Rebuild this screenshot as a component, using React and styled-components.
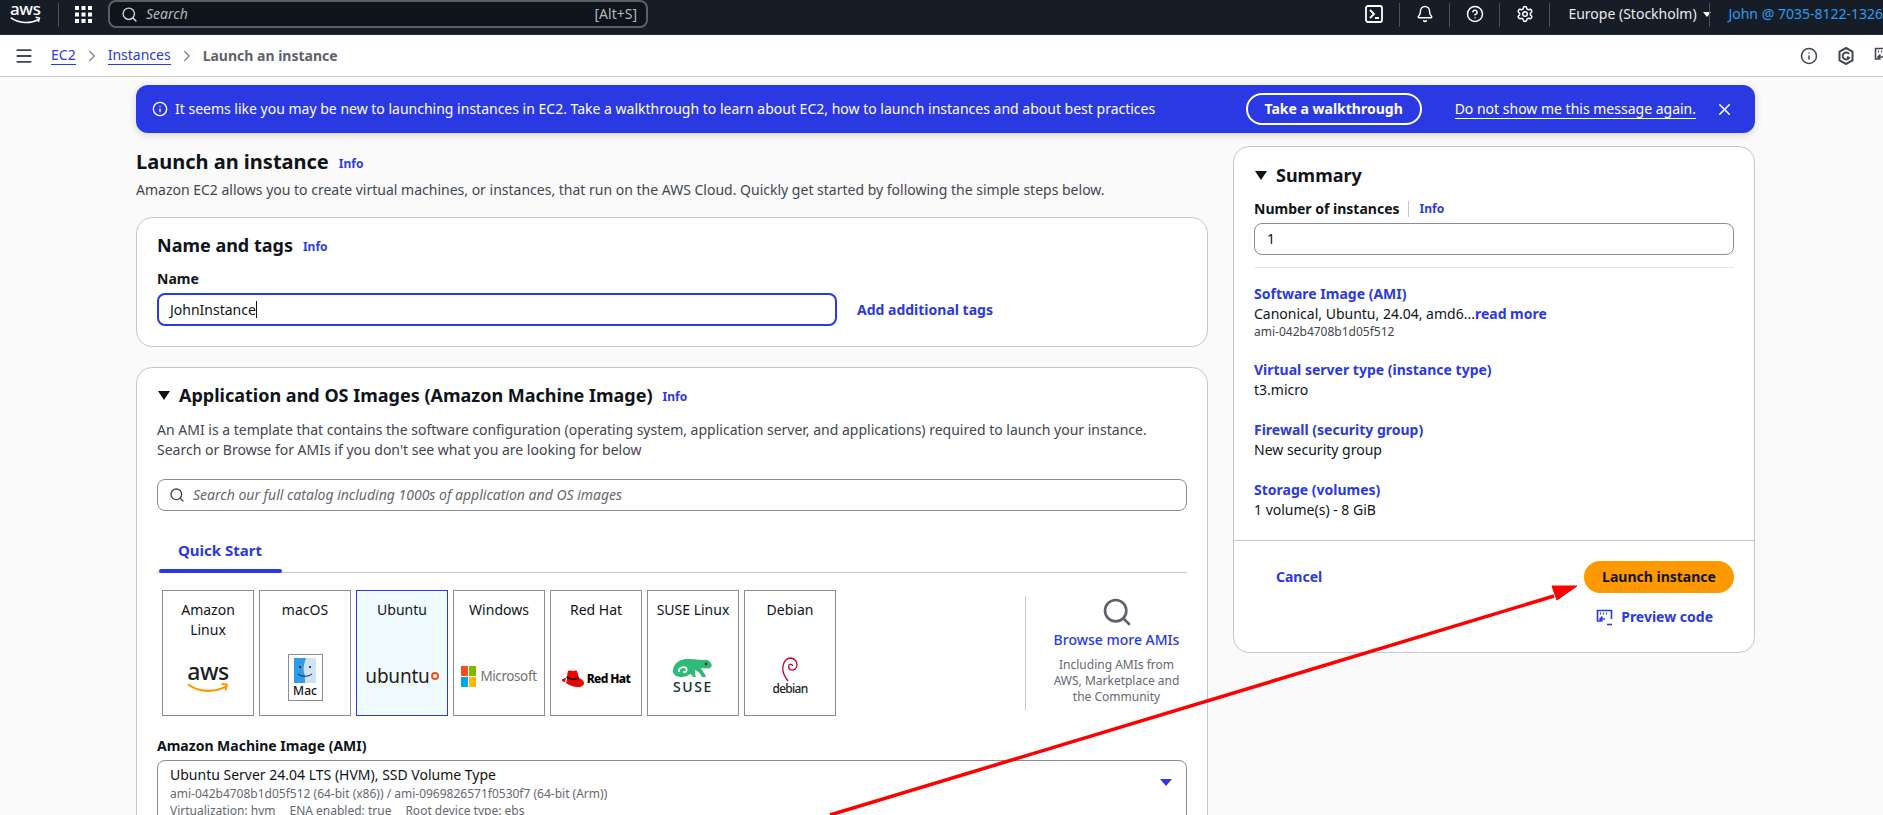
import React from "react";
import styled, { createGlobalStyle } from "styled-components";
import { Search, Bell, CircleHelp, Settings, Info as InfoIcon, X, Menu, ChevronRight } from "lucide-react";

const Global = createGlobalStyle`
  html, body { margin: 0; padding: 0; height: 100%; overflow: hidden; background: #fafafb; }
  body { font-family: "Noto Sans", "Open Sans", sans-serif; font-size: 14px; line-height: 20px; color: #0f141a; }
  * { box-sizing: border-box; }
`;

const blue = "#2b39e2";

const Page = styled.div`
  position: relative;
  width: 1883px;
  height: 815px;
  overflow: hidden;
`;
const TopBar = styled.header`
  height: 35px;
  background: #161d26;
  border-bottom: 1px solid #2a3038;
  display: flex;
  align-items: center;
  color: #e9ebed;
`;
const AwsMark = styled.div`
  width: 58px;
  height: 28px;
  margin-top: -6px;
  padding-left: 10px;
  display: flex;
  flex-direction: column;
  color: #fff;
  font-size: 17px;
  line-height: 17px;
  font-weight: 500;
  letter-spacing: -0.4px;
  svg { display: block; margin-top: -1px; }
`;
const TopSep = styled.span`
  width: 1px;
  height: 24px;
  background: #4b5158;
  flex: none;
  margin-top: -5px;
`;
const GridButton = styled.div`
  margin: -6px 16px 0 16px;
  display: flex;
`;
const SearchBox = styled.div`
  width: 540px;
  height: 28px;
  margin-top: -6px;
  border: 2px solid #5b6068;
  border-radius: 8px;
  background: #0f141a;
  display: flex;
  align-items: center;
  padding: 0 9px 0 11px;
  color: #b4b8bd;
  gap: 8px;
`;
const SearchHint = styled.span`
  font-style: italic;
  flex: 1;
  font-size: 14px;
`;
const Spacer = styled.div`
  flex: 1;
`;
const TopIcon = styled.div`
  width: ${(p) => p.$w}px;
  display: flex;
  justify-content: center;
  margin-top: -6px;
  color: #fff;
`;
const Region = styled.div`
  margin: -6px 0 0 18px;
  width: 141px;
  display: flex;
  align-items: center;
  gap: 6px;
  white-space: nowrap;
  font-size: 14px;
`;
const Caret = styled.span`
  width: 0;
  height: 0;
  border-left: ${(p) => p.$s}px solid transparent;
  border-right: ${(p) => p.$s}px solid transparent;
  border-top: ${(p) => Math.round(p.$s * 1.2)}px solid ${(p) => p.$c};
  flex: none;
`;
const Account = styled.div`
  margin: -6px 0 0 18px;
  color: #2d9cf0;
  white-space: nowrap;
  font-size: 14px;
`;
const Crumbs = styled.nav`
  height: 42px;
  background: #fff;
  border-bottom: 1px solid #c6c6cd;
  display: flex;
  align-items: center;
  padding-left: 14px;
  color: #424650;
`;
const CrumbLink = styled.a`
  color: ${blue};
  border-bottom: 1px solid ${blue};
  line-height: 18px;
  font-size: 14px;
`;
const CrumbCurrent = styled.span`
  color: #5f6369;
  font-weight: 700;
  font-size: 14px;
`;
const ChevronSlot = styled.span`
  display: flex;
  color: #8c8c94;
  margin: 0 7px;
`;
const MenuSlot = styled.span`
  display: flex;
  margin-right: 17px;
  color: #424650;
`;
const CrumbIcons = styled.div`
  margin-left: auto;
  display: flex;
  gap: 20px;
  margin-right: -8px;
  color: #424650;
`;
const Content = styled.main`
  padding: 8px 0 0 136px;
`;
const Banner = styled.section`
  width: 1619px;
  height: 48px;
  background: #2b39e2;
  border-radius: 12px;
  box-shadow: 0 2px 8px rgba(0, 7, 22, 0.15);
  display: flex;
  align-items: center;
  color: #fff;
  padding: 0 21px 0 16px;
  white-space: nowrap;
`;
const BannerText = styled.span`
  margin-left: 7px;
  flex: 1;
`;
const WalkButton = styled.span`
  width: 176px;
  height: 32px;
  border: 2px solid #fff;
  border-radius: 20px;
  display: flex;
  align-items: center;
  justify-content: center;
  font-weight: 700;
`;
const Dismiss = styled.a`
  margin: 0 19px 0 33px;
  border-bottom: 1px solid #fff;
  line-height: 18px;
`;
const Columns = styled.div`
  display: grid;
  grid-template-columns: 1072px 522px;
  gap: 25px;
  margin-top: 13px;
  width: 1619px;
  align-items: start;
`;
const TitleRow = styled.div`
  height: 32px;
  display: flex;
  align-items: center;
`;
const H1 = styled.h1`
  margin: 0;
  font-size: 20px;
  line-height: 32px;
  font-weight: 700;
`;
const Info = styled.a`
  color: ${blue};
  font-size: 12px;
  font-weight: 700;
  margin-left: ${(p) => p.$ml || 10}px;
  margin-top: ${(p) => p.$mt || 0}px;
`;
const Lead = styled.p`
  margin: 2px 0 17px;
  color: #424650;
`;
const Card = styled.section`
  background: #fff;
  border: 1px solid #c6c6cd;
  border-radius: 16px;
  padding: ${(p) => p.$pad};
  margin-bottom: 20px;
  height: ${(p) => p.$h || "auto"};
`;
const CardTitle = styled.h2`
  margin: 0;
  font-size: 18px;
  line-height: 28px;
  font-weight: 700;
  display: flex;
  align-items: center;
`;
const Triangle = styled.span`
  display: inline-block;
  width: 0;
  height: 0;
  margin-right: 9px;
  margin-left: 1px;
  border-left: 6px solid transparent;
  border-right: 6px solid transparent;
  border-top: 9px solid #0f141a;
  flex: none;
`;
const Label = styled.div`
  font-weight: 700;
  margin-top: ${(p) => p.$mt || 0}px;
`;
const NameRow = styled.div`
  display: flex;
  align-items: center;
  margin-top: 4px;
  gap: 20px;
`;
const NameInput = styled.div`
  width: 680px;
  height: 33px;
  border: 2px solid ${blue};
  border-radius: 8px;
  padding: 0 11px;
  display: flex;
  align-items: center;
`;
const CursorBar = styled.span`
  width: 1px;
  height: 17px;
  background: #0f141a;
`;
const BoldLink = styled.a`
  color: ${blue};
  font-weight: 700;
`;
const Desc = styled.p`
  margin: 11px 0 19px;
  color: #424650;
`;
const AmiSearch = styled.div`
  height: 32px;
  border: 1px solid #8c8c94;
  border-radius: 8px;
  display: flex;
  align-items: center;
  padding: 0 11px;
  gap: 8px;
  color: #656871;
  font-style: italic;
`;
const TabRow = styled.div`
  height: 62px;
  border-bottom: 1px solid #c6c6cd;
  position: relative;
  padding: 29px 0 0 21px;
`;
const Tab = styled.span`
  color: ${blue};
  font-weight: 700;
  font-size: 15px;
`;
const TabMark = styled.span`
  position: absolute;
  left: 2px;
  bottom: -1px;
  width: 123px;
  height: 4px;
  background: ${blue};
  border-radius: 2px;
`;
const OsRow = styled.div`
  display: flex;
  margin: 17px 0 0 5px;
  height: 126px;
`;
const OsTile = styled.div`
  width: 92px;
  height: 126px;
  margin-right: 5px;
  border: 1px solid ${(p) => (p.$active ? blue : "#8c8c94")};
  background: ${(p) => (p.$active ? "#f0fbff" : "#fff")};
  padding-top: 9px;
  text-align: center;
  display: flex;
  flex-direction: column;
  align-items: center;
  color: #0f141a;
`;
const OsName = styled.div`
  height: 46px;
  width: 90px;
  padding: 0 6px;
`;
const OsLogo = styled.div`
  height: 60px;
  width: 90px;
  display: flex;
  flex-direction: column;
  align-items: center;
  justify-content: center;
`;
const BrowsePane = styled.div`
  margin-left: auto;
  margin-right: 5px;
  margin-top: 6px;
  height: 114px;
  width: 131px;
  border-left: 1px solid #c6c6cd;
  display: flex;
  flex-direction: column;
  align-items: center;
  text-align: center;
  padding-left: 25px;
  width: 157px;
  color: #656871;
`;
const BrowseLink = styled.a`
  color: ${blue};
  font-weight: 500;
  white-space: nowrap;
  margin-top: 2px;
`;
const BrowseNote = styled.div`
  font-size: 12px;
  line-height: 16px;
  margin-top: 7px;
  white-space: nowrap;
`;
const AmiSelect = styled.div`
  height: 80px;
  margin-top: 4px;
  border: 1px solid #8c8c94;
  border-radius: 8px;
  padding: 4px 12px;
  position: relative;
`;
const SelectMeta = styled.div`
  font-size: 12px;
  line-height: 17px;
  color: #656871;
  white-space: nowrap;
`;
const MetaGap = styled.span`
  margin-right: 14px;
`;
const SelectCaret = styled.span`
  position: absolute;
  right: 14px;
  top: 25px;
`;
const SummaryTop = styled.div`
  padding: 14px 20px 0;
`;
const InstanceHead = styled.div`
  display: flex;
  align-items: center;
  margin-top: 10px;
`;
const HeadSep = styled.span`
  width: 1px;
  height: 16px;
  background: #c6c6cd;
  margin-left: 8px;
`;
const CountInput = styled.div`
  height: 32px;
  margin-top: 4px;
  border: 1px solid #8c8c94;
  border-radius: 8px;
  padding: 0 12px;
  display: flex;
  align-items: center;
`;
const Hr = styled.hr`
  border: 0;
  border-top: 1px solid #e4e5e9;
  margin: 12px 0 16px;
`;
const SummaryGroup = styled.div`
  margin-bottom: 20px;
  min-height: 40px;
`;
const GroupLink = styled.a`
  display: block;
  color: ${blue};
  font-weight: 700;
`;
const GroupSub = styled.div`
  font-size: 12px;
  line-height: 16px;
  color: #424650;
`;
const SummaryFoot = styled.div`
  border-top: 1px solid #c6c6cd;
  height: 113px;
  padding: 20px 20px 0 0;
  display: flex;
  flex-direction: column;
  align-items: flex-end;
  position: relative;
`;
const FootRow = styled.div`
  width: 100%;
  display: flex;
  align-items: center;
  justify-content: space-between;
  padding-left: 42px;
`;
const LaunchButton = styled.span`
  width: 150px;
  height: 32px;
  background: #ff9900;
  border-radius: 20px;
  display: flex;
  align-items: center;
  justify-content: center;
  font-weight: 700;
  color: #0f141a;
`;
const Preview = styled.a`
  display: flex;
  align-items: center;
  gap: 8px;
  margin: 14px 21px 0 0;
  color: ${blue};
  font-weight: 700;
`;
const ArrowLayer = styled.svg`
  position: absolute;
  left: 0;
  top: 0;
  pointer-events: none;
`;
const LogoAws = styled.span`
  font-size: 23px;
  line-height: 22px;
  font-weight: 500;
  letter-spacing: -0.5px;
  color: #1b1f24;
`;
const MacBox = styled.div`
  width: 35px;
  height: 47px;
  border: 1px solid #8c8c94;
  display: flex;
  flex-direction: column;
  align-items: center;
  padding-top: 3px;
  font-size: 12px;
  line-height: 16px;
  font-weight: 500;
  margin-top: 3px;
`;
const UbuntuWord = styled.span`
  font-size: 19px;
  letter-spacing: -0.2px;
  color: #222;
  display: flex;
  align-items: center;
  gap: 1px;
`;
const MsWrap = styled.div`
  display: flex;
  align-items: center;
  gap: 4px;
  color: #737373;
  font-size: 13.5px;
  letter-spacing: -0.4px;
`;
const HatWrap = styled.div`
  display: flex;
  align-items: center;
  gap: 3px;
  font-weight: 800;
  font-size: 12px;
  letter-spacing: -0.6px;
  color: #000;
  margin-top: 6px;
  white-space: nowrap;
`;
const SuseWord = styled.span`
  font-size: 14px;
  line-height: 14px;
  letter-spacing: 1.6px;
  color: #0c322c;
  font-weight: 500;
  margin-top: 1px;
`;
const DebianWord = styled.span`
  font-size: 12px;
  line-height: 14px;
  letter-spacing: -0.7px;
  font-weight: 500;
  color: #222;
`;

const GridIcon = () => (
  <svg width="17" height="17" viewBox="0 0 17 17" fill="#fff">
    {[0, 6.5, 13].map((x) => [0, 6.5, 13].map((y) => <rect key={`${x}-${y}`} x={x} y={y} width="4" height="4" />))}
  </svg>
);
const TerminalIcon = () => (
  <svg width="18" height="18" viewBox="0 0 18 18" fill="none" stroke="#fff" strokeWidth="1.8">
    <rect x="1" y="1" width="16" height="16" rx="2" />
    <path d="M5 5l4 4-4 4M10 13h4" />
  </svg>
);
const PreviewIcon = ({ color }) => (
  <svg width="17" height="17" viewBox="0 0 17 17" fill="none" stroke={color} strokeWidth="1.6">
    <path d="M5 12H1.5V1.5h14V10" />
    <path d="M4 4.5h1M7 4.5h1M10 4.5h1" strokeWidth="2" />
    <path d="M9 10H4.5M6.5 7.5L4 10l2.5 2.5M11 15.5h5" />
  </svg>
);
const HexIcon = () => (
  <svg width="16" height="18" viewBox="0 0 16 18" fill="none" stroke="#424650" strokeWidth="2">
    <path d="M8 1l6.5 3.5v9L8 17l-6.5-3.5v-9z" />
    <path d="M11 7a3.5 3.5 0 1 0 0 4l-2-1" />
  </svg>
);
const Smile = ({ w, c, sw }) => (
  <svg width={w} height={w * 0.26} viewBox="0 0 40 10" fill="none" stroke={c} strokeWidth={sw}>
    <path d="M1 2c10 8 26 8 36 2" />
    <path d="M33 1.5l5 1-1.5 5" />
  </svg>
);
const FinderIcon = () => (
  <svg width="22" height="25" viewBox="0 0 22 25">
    <rect width="22" height="25" fill="#cfe3f4" />
    <path d="M0 0h12c-2 6-3 11-2 14 1 4 1 7 1 11H0z" fill="#2f9be9" />
    <circle cx="6" cy="9" r="1.1" fill="#123" />
    <circle cx="16" cy="9" r="1.1" fill="#123" />
    <path d="M4 16c4 3 10 3 14 0" fill="none" stroke="#123" strokeWidth="1" />
  </svg>
);
const MsIcon = () => (
  <svg width="15" height="21" viewBox="0 0 15 21" style={{ display: "block" }}>
    <rect x="0" y="0" width="7" height="10" fill="#f25022" />
    <rect x="8" y="0" width="7" height="10" fill="#7fba00" />
    <rect x="0" y="11" width="7" height="10" fill="#00a4ef" />
    <rect x="8" y="11" width="7" height="10" fill="#ffb900" />
  </svg>
);
const HatIcon = () => (
  <svg width="22" height="18" viewBox="0 0 22 18">
    <path d="M6 1c2-1 4 0 5 0s3-1 4 0l2 7c3 1 5 3 5 5 0 2-2 4-6 4-5 0-9-2-12-4l1-3C5 8 5 4 6 1z" fill="#e00" />
    <path d="M4.5 7c3 2 8 3 12 1" stroke="#000" strokeWidth="1.6" fill="none" />
    <path d="M0 10c0-1 2-2 4-2l-1 4C1 12 0 11 0 10z" fill="#e00" />
  </svg>
);
const SuseIcon = () => (
  <svg width="40" height="20" viewBox="0 0 40 20">
    <path d="M0 12C0 5 6 0 14 0c8 0 13 1 17 1 2-1 5 0 7 3 1 2 1 4-1 5-3 1-6 0-9 0 1 3 4 5 5 9h-4c-2-4-4-6-7-7 0 3 0 5 1 7h-3c-1-2-2-3-3-3-2 2-5 3-8 3-4 0-9-1-9-6z" fill="#30ba78" />
    <path d="M6 13c-1-4 4-6 7-4 2 2 0 5-3 4" fill="none" stroke="#fff" strokeWidth="1.8" />
    <circle cx="33" cy="5" r="1.4" fill="#0c322c" />
  </svg>
);
const DebianSwirl = () => (
  <svg width="16" height="25" viewBox="0 0 16 25" fill="none" stroke="#c70036" strokeWidth="1.3">
    <path d="M6 24C2 19 0 14 1 9c1-5 4-8 8-8 4 1 6 4 6 7s-3 6-6 5c-2-1-3-3-2-5 1-1 3-1 4 1" />
  </svg>
);

const tiles = [
  { name: "Amazon Linux", logo: <><LogoAws>aws</LogoAws><Smile w={42} c="#f90" sw="2" /></> },
  { name: "macOS", logo: <MacBox><FinderIcon />Mac</MacBox> },
  {
    name: "Ubuntu",
    active: true,
    logo: (
      <UbuntuWord>
        ubuntu
        <svg width="8" height="8" viewBox="0 0 8 8"><circle cx="4" cy="4" r="3" fill="none" stroke="#e95420" strokeWidth="2" /></svg>
      </UbuntuWord>
    ),
  },
  { name: "Windows", logo: <MsWrap><MsIcon />Microsoft</MsWrap> },
  { name: "Red Hat", logo: <HatWrap><HatIcon />Red Hat</HatWrap> },
  { name: "SUSE Linux", logo: <><SuseIcon /><SuseWord>SUSE</SuseWord></> },
  { name: "Debian", logo: <><DebianSwirl /><DebianWord>debian</DebianWord></> },
];

const summaryItems = [
  { link: "Virtual server type (instance type)", value: "t3.micro" },
  { link: "Firewall (security group)", value: "New security group" },
  { link: "Storage (volumes)", value: "1 volume(s) - 8 GiB" },
];

export default function App() {
  return (
    <Page>
      <Global />
      <TopBar>
        <AwsMark>
          aws
          <Smile w={31} c="#fff" sw="2" />
        </AwsMark>
        <TopSep />
        <GridButton><GridIcon /></GridButton>
        <SearchBox>
          <Search size={17} color="#d1d5db" />
          <SearchHint>Search</SearchHint>
          <span>[Alt+S]</span>
        </SearchBox>
        <Spacer />
        <TopIcon $w={50}><TerminalIcon /></TopIcon>
        <TopSep />
        <TopIcon $w={49}><Bell size={18} strokeWidth={2} /></TopIcon>
        <TopSep />
        <TopIcon $w={49}><CircleHelp size={18} strokeWidth={2} /></TopIcon>
        <TopSep />
        <TopIcon $w={49}><Settings size={18} strokeWidth={2} /></TopIcon>
        <TopSep />
        <Region>Europe (Stockholm)<Caret $s={4} $c="#fff" /></Region>
        <TopSep />
        <Account>John @ 7035-8122-1326</Account>
      </TopBar>
      <Crumbs>
        <MenuSlot><Menu size={20} strokeWidth={2.2} /></MenuSlot>
        <CrumbLink>EC2</CrumbLink>
        <ChevronSlot><ChevronRight size={18} /></ChevronSlot>
        <CrumbLink>Instances</CrumbLink>
        <ChevronSlot><ChevronRight size={18} /></ChevronSlot>
        <CrumbCurrent>Launch an instance</CrumbCurrent>
        <CrumbIcons>
          <InfoIcon size={18} strokeWidth={2} />
          <HexIcon />
          <PreviewIcon color="#424650" />
        </CrumbIcons>
      </Crumbs>
      <Content>
        <Banner>
          <InfoIcon size={16} strokeWidth={2} />
          <BannerText>It seems like you may be new to launching instances in EC2. Take a walkthrough to learn about EC2, how to launch instances and about best practices</BannerText>
          <WalkButton>Take a walkthrough</WalkButton>
          <Dismiss>Do not show me this message again.</Dismiss>
          <X size={19} strokeWidth={2} />
        </Banner>
        <Columns>
          <div>
            <TitleRow>
              <H1>Launch an instance</H1>
              <Info $mt={4}>Info</Info>
            </TitleRow>
            <Lead>Amazon EC2 allows you to create virtual machines, or instances, that run on the AWS Cloud. Quickly get started by following the simple steps below.</Lead>
            <Card $pad="13px 20px 0" $h="130px">
              <TitleRow as="div" style={{ height: 28 }}>
                <CardTitle>Name and tags</CardTitle>
                <Info $mt={4}>Info</Info>
              </TitleRow>
              <Label $mt={10}>Name</Label>
              <NameRow>
                <NameInput>JohnInstance<CursorBar /></NameInput>
                <BoldLink>Add additional tags</BoldLink>
              </NameRow>
            </Card>
            <Card $pad="13px 20px 0" $h="520px">
              <TitleRow as="div" style={{ height: 28 }}>
                <CardTitle><Triangle />Application and OS Images (Amazon Machine Image)</CardTitle>
                <Info $mt={4}>Info</Info>
              </TitleRow>
              <Desc>An AMI is a template that contains the software configuration (operating system, application server, and applications) required to launch your instance. Search or Browse for AMIs if you don't see what you are looking for below</Desc>
              <AmiSearch>
                <Search size={16} color="#424650" />
                Search our full catalog including 1000s of application and OS images
              </AmiSearch>
              <TabRow>
                <Tab>Quick Start</Tab>
                <TabMark />
              </TabRow>
              <OsRow>
                {tiles.map((t) => (
                  <OsTile key={t.name} $active={t.active}>
                    <OsName>{t.name}</OsName>
                    <OsLogo>{t.logo}</OsLogo>
                  </OsTile>
                ))}
                <BrowsePane>
                  <Search size={32} strokeWidth={2} color="#5f6369" />
                  <BrowseLink>Browse more AMIs</BrowseLink>
                  <BrowseNote>Including AMIs from<br />AWS, Marketplace and<br />the Community</BrowseNote>
                </BrowsePane>
              </OsRow>
              <Label $mt={20}>Amazon Machine Image (AMI)</Label>
              <AmiSelect>
                <div>Ubuntu Server 24.04 LTS (HVM), SSD Volume Type</div>
                <SelectMeta>ami-042b4708b1d05f512 (64-bit (x86)) / ami-0969826571f0530f7 (64-bit (Arm))</SelectMeta>
                <SelectMeta>
                  <MetaGap>Virtualization: hvm</MetaGap>
                  <MetaGap>ENA enabled: true</MetaGap>
                  Root device type: ebs
                </SelectMeta>
                <SelectCaret><Caret $s={6} $c={blue} /></SelectCaret>
              </AmiSelect>
            </Card>
          </div>
          <Card $pad="0" $h="507px">
            <SummaryTop>
              <CardTitle><Triangle />Summary</CardTitle>
              <InstanceHead>
                <Label>Number of instances</Label>
                <HeadSep />
                <Info $ml={11}>Info</Info>
              </InstanceHead>
              <CountInput>1</CountInput>
              <Hr />
              <SummaryGroup>
                <GroupLink>Software Image (AMI)</GroupLink>
                <div>Canonical, Ubuntu, 24.04, amd6...<BoldLink>read more</BoldLink></div>
                <GroupSub>ami-042b4708b1d05f512</GroupSub>
              </SummaryGroup>
              {summaryItems.map((s) => (
                <SummaryGroup key={s.link}>
                  <GroupLink>{s.link}</GroupLink>
                  <div>{s.value}</div>
                </SummaryGroup>
              ))}
            </SummaryTop>
            <SummaryFoot>
              <FootRow>
                <BoldLink>Cancel</BoldLink>
                <LaunchButton>Launch instance</LaunchButton>
              </FootRow>
              <Preview><PreviewIcon color={blue} />Preview code</Preview>
            </SummaryFoot>
          </Card>
        </Columns>
      </Content>
      <ArrowLayer width="1883" height="815" viewBox="0 0 1883 815">
        <path d="M830 815L1554 596" stroke="#ff0000" strokeWidth="3.5" fill="none" />
        <path d="M1577 586L1552 586L1557 600Z" fill="#ff0000" stroke="#ff0000" strokeWidth="1" />
      </ArrowLayer>
    </Page>
  );
}
